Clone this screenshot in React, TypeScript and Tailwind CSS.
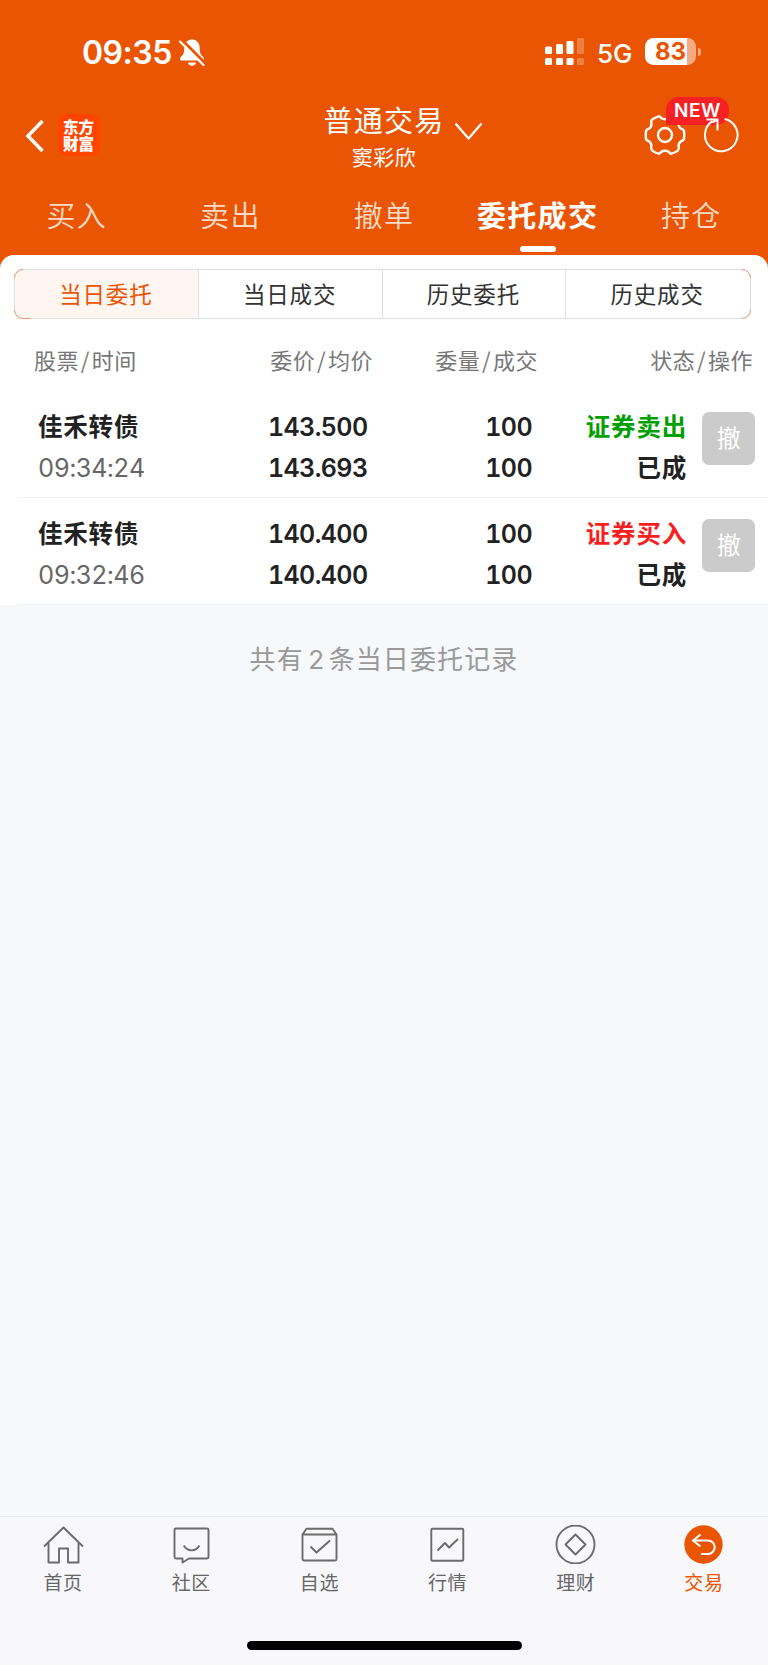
import type { ReactNode } from 'react';

interface Order {
  name: string;
  time: string;
  price: string;
  avg: string;
  qty: string;
  filled: string;
  side: 'buy' | 'sell';
  status: string;
}

const TABS = ['买入', '卖出', '撤单', '委托成交', '持仓'];
const SEGMENTS = ['当日委托', '当日成交', '历史委托', '历史成交'];

const ORDERS: Order[] = [
  { name: '佳禾转债', time: '09:34:24', price: '143.500', avg: '143.693', qty: '100', filled: '100', side: 'sell', status: '已成' },
  { name: '佳禾转债', time: '09:32:46', price: '140.400', avg: '140.400', qty: '100', filled: '100', side: 'buy', status: '已成' },
];

const NAV: { label: string; icon: ReactNode }[] = [
  { label: '首页', icon: <><path d="M1 20.5 20.5 1.5 40 20.5"/><path d="M5.5 17v19.5H16V22.5h9v14h10.5V17"/></> },
  { label: '社区', icon: <><path d="M5 2.5h31a1.5 1.5 0 0 1 1.5 1.5v27a1.5 1.5 0 0 1-1.5 1.5H18L11.5 36.5V32.5H5A1.5 1.5 0 0 1 3.5 31V4A1.5 1.5 0 0 1 5 2.5z"/><path d="M12.8 19.5c3.7 6.5 12 6.5 15.6 0"/></> },
  { label: '自选', icon: <><path d="M3.5 8.5 7.5 2.7h26l4 5.8V33A1.5 1.5 0 0 1 36 34.5H5A1.5 1.5 0 0 1 3.5 33zM3.5 8.5h34"/><path d="m11.5 20.5 6 6L31 14.500"/></> },
  { label: '行情', icon: <><rect x="4.3" y="2.7" width="32" height="32" rx="1"/><path d="m10.5 24.5 7.500-7.500 4 4.500 9-8.500"/></> },
  { label: '理财', icon: <><circle cx="20.5" cy="18.5" r="19"/><path d="M20.5 8.5 30.5 18.5 20.5 28.5 10.5 18.5z"/></> },
];

function StatusBar() {
  return (
    <div className="flex h-[96px] items-start pt-[33px] text-white">
      <div className="flex items-center pl-[82px]">
        <span className="h-[40px] w-[97px] text-[32px] font-semibold leading-[40px] tracking-[-0.5px]">09:35</span>
        <svg width="26" height="28" viewBox="0 0 26 28" fill="none">
          <path d="M13 .5c-5 0-7.7 4-7.7 8.5 0 5-1.2 7.2-3.5 9-.8.7-1 3.5.4 3.5h21.6c1.4 0 1.2-2.800.4-3.500-2.300-1.800-3.500-4-3.500-9 0-4.500-2.700-8.500-7.700-8.500z" fill="white"/>
          <path d="M9 23.500h8c-.8 4.300-7.200 4.300-8 0z" fill="white"/>
          <path d="M2.5 .5 26 24" stroke="#ea5504" strokeWidth="3"/>
          <path d="M1 2.5 24.5 26" stroke="white" strokeWidth="2.2" strokeLinecap="round"/>
        </svg>
      </div>
      <div className="ml-auto flex pt-[5px] pr-[67px]">
        <svg width="40" height="28" viewBox="0 0 40 28" fill="white">
          <rect x="0" y="8.5" width="7" height="7.5" rx="1.5"/><rect x="0" y="20" width="7" height="7" rx="1.5"/>
          <rect x="11" y="6" width="7" height="10" rx="1.5"/><rect x="11" y="20" width="7" height="7" rx="1.5"/>
          <rect x="21.5" y="3" width="7" height="13" rx="1.5"/><rect x="21.5" y="20" width="7" height="7" rx="1.5"/>
          <g opacity=".25"><rect x="32" y="0" width="7" height="16" rx="1.5"/><rect x="32" y="20" width="7" height="7" rx="1.5"/></g>
        </svg>
        <span className="ml-[12px] h-[30px] w-[48px] text-[26px] font-medium leading-[31px]">5G</span>
        <div className="flex h-[27px] w-[51px] items-center justify-center overflow-hidden rounded-[8.5px] bg-[linear-gradient(90deg,#fff_83%,#f5aa82_83%)] text-[24px] font-bold leading-[28px] text-[#ea5504]">83</div>
        <div className="mt-[10px] ml-[1.5px] h-[8px] w-[3.5px] rounded-r-full bg-[#f5aa82]" />
      </div>
    </div>
  );
}

function TitleBar() {
  return (
    <div className="grid h-[91px] grid-cols-[1fr_auto_1fr] text-white">
      <div className="flex items-start pl-[25px]">
        <svg className="mt-[22.5px]" width="20" height="34" viewBox="0 0 20 34" fill="none" stroke="white" strokeWidth="3.5"><path d="M17.5 2 3 17l14.5 15"/></svg>
        <div className="mt-[18px] ml-[12.5px] flex h-[42px] w-[42px] flex-col items-center justify-center rounded-[9px] bg-[#ff4400] font-['Noto_Sans_CJK_SC'] text-[15.5px] font-black leading-[17px]">
          <span>东方</span>
          <span>财富</span>
        </div>
      </div>
      <div className="relative flex flex-col items-center font-['Noto_Sans_CJK_SC']">
        <span className="mt-[1px] h-[44px] text-[29px] leading-[44px] tracking-[1.2px]">普通交易</span>
        <span className="h-[30px] text-[21px] leading-[30px] tracking-[0.5px]">窦彩欣</span>
        <svg className="absolute top-[26px] left-full ml-[9px]" width="30" height="20" viewBox="0 0 30 20" fill="none" stroke="white" strokeWidth="2.2"><path d="M2.5 1.5 15.5 16.5 28.5 1.5"/></svg>
      </div>
      <div className="relative flex items-start justify-end pr-[29px]">
        <svg className="mt-[18px]" width="42" height="42" viewBox="-21 -21 42 42" fill="none" stroke="white" strokeWidth="2.4" strokeLinejoin="round">
          <path d="M19 -4Q19.5 0 19 4Q18.5 5.5 16 6.3Q13 8.5 13.7 12Q14.2 14.3 13 15.3Q10 17.8 6.5 18.7Q5.3 19 4 17Q0 14.5 -4 17Q-5.3 19 -6.5 18.7Q-10 17.8 -13 15.3Q-14.2 14.3 -13.7 12Q-13 8.5 -16 6.3Q-18.5 5.5 -19 4Q-19.5 0 -19 -4Q-18.5 -5.5 -16 -6.3Q-13 -8.5 -13.7 -12Q-14.2 -14.3 -13 -15.3Q-10 -17.8 -6.5 -18.7Q-5.3 -19 -4 -17Q0 -14.5 4 -17Q5.3 -19 6.5 -18.7Q10 -17.8 13 -15.3Q14.2 -14.3 13.7 -12Q13 -8.5 16 -6.3Q18.5 -5.5 19 -4Z"/>
          <circle r="7"/>
        </svg>
        <span className="absolute top-[1px] right-[39px] flex h-[28px] w-[63px] items-center justify-center rounded-[13px] rounded-bl-none bg-[#f52125] text-[19px] font-semibold tracking-[0.5px]">NEW</span>
        <svg className="relative mt-[19px] ml-[17px]" width="36" height="40" viewBox="0 0 36 40" fill="none" stroke="white" strokeWidth="2"><path d="M21.7 4A16.3 16.3 0 1 1 9.5 6.2"/><path d="M3.5 4.5h11v11M14.5 4.5l-5 3"/></svg>
      </div>
    </div>
  );
}

function ColumnTitle({ a, b }: { a: string; b: string }) {
  return <>{a}<span className="mx-[1.8px]">/</span>{b}</>;
}

function OrderRow({ order }: { order: Order }) {
  return (
    <div className="ml-[18px] flex h-[107px] border-b border-[#f1f2f4] pt-[16px] pr-[13px] text-[25px] font-semibold leading-[41px] tabular-nums tracking-[-0.6px] text-[#222]">
      <div className="w-[160px] pl-[20px]">
        <div className="-mt-[2px] mb-[2px] font-['Noto_Sans_CJK_SC'] text-[24.5px] font-bold tracking-[0.8px]">{order.name}</div>
        <div className="font-normal tracking-[-0.5px] text-[#666]">{order.time}</div>
      </div>
      <div className="w-[189.5px] text-right">
        <div>{order.price}</div>
        <div>{order.avg}</div>
      </div>
      <div className="w-[164.5px] text-right">
        <div>{order.qty}</div>
        <div>{order.filled}</div>
      </div>
      <div className="-mt-[2px] w-[155px] text-right font-['Noto_Sans_CJK_SC'] text-[24.5px] font-bold tracking-[0.8px]">
        <div className={order.side === 'sell' ? 'text-[#00a000]' : 'text-[#f81f1f]'}>{order.side === 'sell' ? '证券卖出' : '证券买入'}</div>
        <div>{order.status}</div>
      </div>
      <button className="mt-[5px] ml-auto flex h-[53px] w-[53px] justify-center rounded-[7px] bg-[#cbcbcb] font-['Noto_Sans_CJK_SC'] text-[24px] font-normal leading-[49px] text-white">撤</button>
    </div>
  );
}

export default function App() {
  return (
    <div className="flex h-[1665px] w-[768px] flex-col overflow-hidden bg-[#f6f8fa] font-['Inter','Noto_Sans_CJK_SC',sans-serif]">

      {/* Header */}
      <header className="h-[275px] bg-[#ea5504]">
        <StatusBar />
        <TitleBar />
        <div className="grid h-[68px] grid-cols-5 font-['Noto_Sans_CJK_SC'] text-[29px] tracking-[1.3px]">
          {TABS.map((t, i) => (
            <div key={t} className={i === 3 ? 'flex flex-col items-center font-bold text-white' : 'flex flex-col items-center font-[350] text-[#fcdac8]'}>
              <span className="h-[59px] leading-[54px]">{t}</span>
              {i === 3 && <span className="h-[6px] w-[36px] rounded-full bg-white" />}
            </div>
          ))}
        </div>
      </header>

      {/* Orders */}
      <main className="z-10 -mt-[20px] rounded-t-[14px] bg-white">
        <div className="relative mt-[14px] ml-[14px] h-[50px] w-[737px]">
          <div className="grid h-full grid-cols-4 overflow-hidden rounded-[9px] border border-[#dcdfe8] font-['Noto_Sans_CJK_SC'] text-[22.5px] tracking-[0.8px]">
            {SEGMENTS.map((s, i) => (
              <div key={s} className={i === 0 ? 'bg-[#fff5f1] pr-[2px] text-center leading-[46px] text-[#ea5504]' : '-ml-px border-l border-[#dcdfe8] pr-[2px] text-center leading-[46px] text-[#333]'}>{s}</div>
            ))}
          </div>
          {/* accent corners */}
          <svg className="absolute inset-0" width="737" height="50" viewBox="0 0 737 50" fill="none" stroke="#ee9a70">
            <path d="M.5 9A8.5 8.5 0 0 1 9 .5M.5 41A8.5 8.5 0 0 0 9 49.5h8M728 .5A8.5 8.5 0 0 1 736.5 9M728 49.5A8.5 8.5 0 0 0 736.5 41"/>
          </svg>
        </div>
        <div className="flex h-[72px] pl-[34px] font-['Noto_Sans_CJK_SC'] text-[22px] leading-[81px] tracking-[0.5px] text-[#777]">
          <span className="w-[144px]"><ColumnTitle a="股票" b="时间" /></span>
          <span className="w-[195px] text-right"><ColumnTitle a="委价" b="均价" /></span>
          <span className="w-[165px] text-right"><ColumnTitle a="委量" b="成交" /></span>
          <span className="w-[215px] text-right"><ColumnTitle a="状态" b="操作" /></span>
        </div>
        {ORDERS.map(o => <OrderRow key={o.time} order={o} />)}
      </main>

      <p className="mt-[33px] flex-1 text-center font-['Noto_Sans_CJK_SC'] text-[26px] leading-[40px] tracking-[1.1px] text-[#999]">
        共有<span className="mx-[4.5px] font-['Inter'] tracking-normal">2</span>条当日委托记录
      </p>

      {/* Bottom navigation */}
      <nav className="h-[149px] border-t border-[#e9eaee] bg-[#f8f8fb]">
        <div className="-ml-px grid h-[124px] grid-cols-6 pt-[8px] font-['Noto_Sans_CJK_SC'] text-[19px] tracking-[0.6px] text-[#666]">
          {NAV.map(n => (
            <div key={n.label} className="flex flex-col items-center">
              <svg width="41" height="39" viewBox="0 -1 41 39" fill="none" stroke="#6b6b6b" strokeWidth="1.9" strokeLinejoin="round">{n.icon}</svg>
              <span className="mt-[4px] leading-[27px]">{n.label}</span>
            </div>
          ))}
          <div className="flex flex-col items-center text-[#ea5504]">
            <svg width="41" height="39" viewBox="0 -1 41 39" fill="none" stroke="white" strokeWidth="2">
              <circle cx="20.5" cy="18.5" r="19.2" fill="#ea5504" stroke="none"/>
              <path d="M17.5 8.5 10 14.5l7.5 6M10 14.5h15a6.7 6.7 0 0 1 0 13.4h-7"/>
            </svg>
            <span className="mt-[4px] leading-[27px]">交易</span>
          </div>
        </div>
        <div className="mx-auto h-[9px] w-[275px] rounded-full bg-black" />
      </nav>
    </div>
  );
}
